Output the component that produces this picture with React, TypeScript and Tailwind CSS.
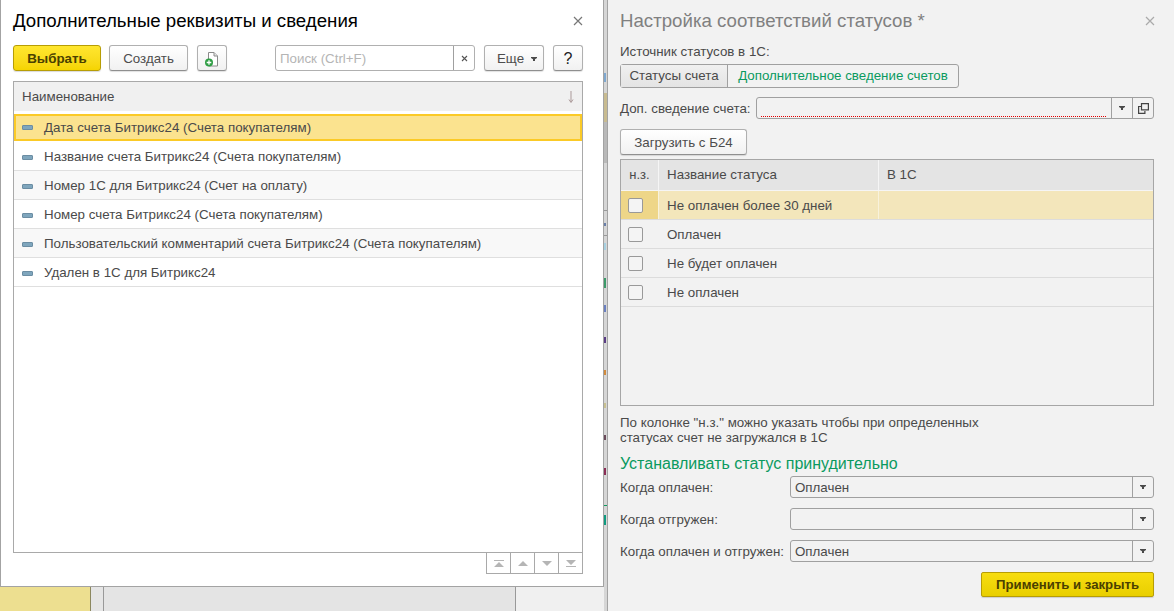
const font = "font-['Liberation_Sans',Arial,sans-serif]"

function Dash() {
  return <span className="block w-[11px] h-[5px] bg-[#7fa6bd] border border-[#6b8da3] rounded-[1px] shrink-0" />
}

function Caret() {
  return (
    <svg width="6" height="4" viewBox="0 0 6 4" className="block">
      <path d="M0 0h6v1L4 2.200V4H2V2.200L0 1z" fill="#4a4a4a" />
    </svg>
  )
}

function DocPlus() {
  return (
    <svg width="14" height="15" viewBox="0 0 14 15">
      <path d="M3.500.5h5.500l3.500 3.500v10h-9z" fill="#fff" stroke="#8a8a8a" />
      <path d="M9 .5v3.500h3.500" fill="#e4e4e4" stroke="#8a8a8a" />
      <circle cx="4" cy="10.500" r="4" fill="#2f9e44" />
      <path d="M4 8.200v4.600M1.700 10.500h4.600" stroke="#fff" strokeWidth="1.300" />
    </svg>
  )
}

function Close({ color }: { color: string }) {
  return (
    <svg width="10" height="10" viewBox="0 0 10 10">
      <path d="M1 1l8 8M9 1l-8 8" stroke={color} strokeWidth="1.200" fill="none" />
    </svg>
  )
}

function GrayButton({ children, className }: { children: React.ReactNode; className: string }) {
  return (
    <div className={`flex items-center justify-center h-[26px] pt-[2px] rounded-[3px] border border-[#b0b0b0] border-b-[#8f8f8f] bg-gradient-to-b from-white to-[#f1f1f1] shadow-[0_1px_1px_rgba(0,0,0,0.12)] text-[#4d4d4d] ${className}`}>
      {children}
    </div>
  )
}

function PagerButton({ d }: { d: string }) {
  return (
    <div className="flex-1 flex items-center justify-center border-l border-[#a9a9a9] first:border-l-0">
      <svg width="10" height="7" viewBox="0 0 10 7">
        <path d={d} fill="#b5b5b5" />
      </svg>
    </div>
  )
}

function LeftDialog() {
  const rows = [
    "Дата счета Битрикс24 (Счета покупателям)",
    "Название счета Битрикс24 (Счета покупателям)",
    "Номер 1С для Битрикс24 (Счет на оплату)",
    "Номер счета Битрикс24 (Счета покупателям)",
    "Пользовательский комментарий счета Битрикс24 (Счета покупателям)",
    "Удален в 1С для Битрикс24",
  ]
  return (
    <div className="h-[587px] w-[604px] shrink-0 bg-white border-l border-b border-r border-[#a3a3a3] flex flex-col pl-[12px] pr-[20px]">
      <div className="h-[45px] flex items-center justify-between pb-[3px]">
        <span className="text-[18.67px] text-black">Дополнительные реквизиты и сведения</span>
        <Close color="#777" />
      </div>
      <div className="h-[26px] flex items-center text-[13.33px]">
        <div className="w-[88px] h-[26px] pt-[2px] flex items-center justify-center rounded-[3px] border border-[#b79d05] bg-gradient-to-b from-[#ffe62e] to-[#f5d400] shadow-[0_1px_1px_rgba(0,0,0,0.15)] font-bold text-[#4a4000]">Выбрать</div>
        <GrayButton className="w-[79px] ml-[8px]">Создать</GrayButton>
        <GrayButton className="w-[30px] ml-[9px]">
          <DocPlus />
        </GrayButton>
        <div className="w-[200px] ml-[48px] h-[26px] flex rounded-[3px] border border-[#b0b0b0] bg-white">
          <span className="flex-1 pl-[4px] leading-[26px] text-[#b5b5b5]">Поиск (Ctrl+F)</span>
          <span className="w-[21px] border-l border-[#a0a0a0] flex items-center justify-center text-[#555]">
            <svg width="7" height="7" viewBox="0 0 7 7"><path d="M1 1l5 5M6 1l-5 5" stroke="#555" strokeWidth="1.100" /></svg>
          </span>
        </div>
        <GrayButton className="w-[60px] ml-[9px] gap-[7px] pl-[6px]">
          <span>Еще</span>
          <Caret />
        </GrayButton>
        <GrayButton className="w-[30px] ml-[9px] text-[16px] text-[#222]">?</GrayButton>
      </div>
      <div className="mt-[10px] h-[472px] border border-[#a9a9a9] flex flex-col text-[13.33px] text-[#4a4a4a]">
        <div className="h-[29px] shrink-0 bg-[#f0f0f0] flex items-center justify-between pl-[8px] pr-[7px]">
          <span>Наименование</span>
          <svg width="8" height="12" viewBox="0 0 8 12"><path d="M4 0v11M2 8.500L4 11.500 6 8.500" stroke="#a99" fill="none" /></svg>
        </div>
        <div className="h-[3px] shrink-0 bg-white" />
        {rows.map((r, i) => (
          <div
            key={r}
            className={
              i === 0
                ? "h-[27px] mb-[1px] shrink-0 flex items-center pl-[6px] gap-[11px] bg-[#fbe38f] border-2 border-[#fbca26]"
                : `h-[29px] shrink-0 pt-[2px] flex items-center pl-[8px] gap-[11px] border-b border-[#dfdfdf] ${i % 2 === 0 ? "bg-[#f8f8f8]" : "bg-white"}`
            }
          >
            <Dash />
            <span>{r}</span>
          </div>
        ))}
      </div>
      <div className="self-end h-[21px] w-[97px] flex border border-t-0 border-[#a9a9a9]">
        <PagerButton d="M0 0h10v1H0zM5 2l5 5H0z" />
        <PagerButton d="M5 1l5 5H0z" />
        <PagerButton d="M0 1h10L5 6z" />
        <PagerButton d="M0 0h10L5 5zM0 6h10v1H0z" />
      </div>
    </div>
  )
}

function BackgroundStrip() {
  return (
    <div className="flex h-[24px] w-[604px]">
      <div className="w-[90px] bg-[#eddf90]" />
      <div className="w-[14px] border-l border-r border-l-[#8c8860] border-r-[#999] bg-[#e5e5e5]" />
      <div className="w-[412px] bg-[#e4e4e4] border-r border-[#999]" />
      <div className="flex-1 bg-[#f0f0f0]" />
    </div>
  )
}

// sliver of the window behind the dialogs
function Sliver() {
  return (
    <div className="w-[3px] h-[611px] shrink-0 bg-[#d6d6d6] flex flex-col">
      <div className="h-[73px] shrink-0" />
      <div className="h-[9px] w-[2px] bg-[#7fa8cf]" />
      <div className="h-[11px] shrink-0" />
      <div className="h-[29px] bg-[#c8bb90]" />
      <div className="h-[41px] bg-[#b9b9b9]" />
      <div className="h-[47px] shrink-0" />
      <div className="h-[1px] bg-[#999]" />
      <div className="h-[12px] shrink-0" />
      <div className="h-[3px] w-[2px] bg-[#6a7fa8]" />
      <div className="h-[9px] shrink-0" />
      <div className="h-[1px] bg-[#999]" />
      <div className="h-[7px] shrink-0" />
      <div className="h-[7px] w-[2px] bg-[#a8d0e0]" />
      <div className="h-[28px] shrink-0" />
      <div className="h-[10px] w-[2px] bg-[#3d9a6a]" />
      <div className="h-[17px] shrink-0" />
      <div className="h-[7px] w-[2px] bg-[#6a7fc0]" />
      <div className="h-[25px] shrink-0" />
      <div className="h-[6px] w-[2px] bg-[#5a3d85]" />
      <div className="h-[27px] shrink-0" />
      <div className="h-[5px] w-[2px] bg-[#d08a3d]" />
      <div className="h-[28px] shrink-0" />
      <div className="h-[5px] w-[2px] bg-[#c8c090]" />
      <div className="h-[27px] shrink-0" />
      <div className="h-[5px] w-[2px] bg-[#6a4a5a]" />
      <div className="h-[28px] shrink-0" />
      <div className="h-[7px] w-[2px] bg-[#8a2d55]" />
      <div className="h-[30px] shrink-0" />
      <div className="h-[1px] bg-[#0f9a60]" />
      <div className="h-[9px] shrink-0" />
      <div className="h-[10px] w-[2px] bg-[#0f9a80]" />
    </div>
  )
}

function SelectField({ value, suffix = false }: { value?: string; suffix?: boolean }) {
  return (
    <div className="flex-1 h-[22px] flex rounded-[3px] border border-[#a0a0a0] bg-[#f2f2f2]">
      <span className="flex-1 pl-[4px] leading-[21px] text-[#4a4a4a]">{value}</span>
      <span className="w-[21px] border-l border-[#a0a0a0] flex items-center justify-center">
        <Caret />
      </span>
      {suffix && (
        <span className="w-[21px] border-l border-[#a0a0a0] flex items-center justify-center">
          <svg width="11" height="11" viewBox="0 0 11 11" fill="none" stroke="#444" strokeWidth="1.200">
            <path d="M3.500.6h6.900v6.300H3.500z" />
            <path d="M3 3.500H.6v6.900h6.300V8" />
          </svg>
        </span>
      )}
    </div>
  )
}

function RightPanel() {
  const statuses = ["Не оплачен более 30 дней", "Оплачен", "Не будет оплачен", "Не оплачен"]
  return (
    <div className="flex-1 h-[611px] bg-[#f2f2f2] border-l border-[#a3a3a3] pl-[12px] pr-[20px] flex flex-col text-[13.33px] text-[#4a4a4a]">
      <div className="h-[44px] flex items-center justify-between pb-[2px]">
        <span className="text-[18.67px] text-[#808080]">Настройка соответствий статусов *</span>
        <span className="-mr-[1px]">
          <Close color="#aaa" />
        </span>
      </div>
      <div className="h-[16px] leading-[16px]">Источник статусов в 1С:</div>
      <div className="mt-[4px] h-[24px] w-[339px] flex rounded-[3px] border border-[#a0a0a0]">
        <span className="w-[107px] flex items-center justify-center border-r border-[#a0a0a0] bg-gradient-to-b from-[#f0f0f0] to-[#e4e4e4]">Статусы счета</span>
        <span className="flex-1 flex items-center justify-center text-[#0a9a5f]">Дополнительное сведение счетов</span>
      </div>
      <div className="mt-[9px] h-[22px] flex items-center">
        <span className="w-[136px] shrink-0 pt-[1px]">Доп. сведение счета:</span>
        <div className="flex-1 relative">
          <SelectField suffix />
          <div className="absolute left-[5px] w-[345px] bottom-[2px] border-b border-dotted border-[#e00000]" />
        </div>
      </div>
      <GrayButton className="mt-[10px] w-[127px] shrink-0">Загрузить с Б24</GrayButton>
      <div className="mt-[4px] h-[247px] shrink-0 border border-[#a6a6a6] flex flex-col">
        <div className="h-[31px] shrink-0 bg-[#e4e4e4] flex items-center border-b border-[#f5f5f5]">
          <span className="w-[38px] h-full flex items-center justify-center text-[13px] border-r border-[#f5f5f5]">н.з.</span>
          <span className="w-[220px] h-full flex items-center pl-[8px] border-r border-[#f5f5f5]">Название статуса</span>
          <span className="flex-1 pl-[8px]">В 1С</span>
        </div>
        {statuses.map((s, i) => (
          <div key={s} className={`h-[29px] shrink-0 flex items-center border-b border-[#dcdcdc] ${i === 0 ? "bg-[#f3e6bb]" : ""}`}>
            <span className={`w-[38px] h-full flex items-center pl-[7px] border-r ${i === 0 ? "bg-[#eed688] border-[#f8f2dc]" : "border-transparent"}`}>
              <span className="block w-[15px] h-[15px] rounded-[2px] border border-[#999] bg-[#f4f4f4]" />
            </span>
            <span className={`w-[220px] h-full flex items-center pl-[8px] pt-[2px] border-r ${i === 0 ? "border-[#f8f2dc]" : "border-transparent"}`}>{s}</span>
          </div>
        ))}
      </div>
      <div className="mt-[9px] leading-[15px] h-[30px] shrink-0">
        По колонке "н.з." можно указать чтобы при определенных
        <br />
        статусах счет не загружался в 1С
      </div>
      <div className="mt-[9px] h-[20px] shrink-0 text-[16px] leading-[20px] text-[#0a9a5f]">Устанавливать статус принудительно</div>
      <div className="mt-[2px] h-[22px] shrink-0 flex items-center">
        <span className="w-[170px] shrink-0 pt-[2px]">Когда оплачен:</span>
        <SelectField value="Оплачен" />
      </div>
      <div className="mt-[10px] h-[22px] shrink-0 flex items-center">
        <span className="w-[170px] shrink-0 pt-[2px]">Когда отгружен:</span>
        <SelectField />
      </div>
      <div className="mt-[10px] h-[22px] shrink-0 flex items-center">
        <span className="w-[170px] shrink-0 pt-[2px]">Когда оплачен и отгружен:</span>
        <SelectField value="Оплачен" />
      </div>
      <div className="mt-[10px] self-end w-[173px] h-[25px] shrink-0 flex items-center justify-center rounded-[2px] border border-[#b79d05] bg-gradient-to-b from-[#f7dd10] to-[#e9cf00] font-bold text-[13.2px] text-[#4a4000] shadow-[0_1px_1px_rgba(0,0,0,0.15)]">Применить и закрыть</div>
    </div>
  )
}

export default function App() {
  return (
    <div className={`flex w-[1174px] h-[611px] overflow-hidden ${font}`}>
      <div className="w-[604px] shrink-0 flex flex-col">
        <LeftDialog />
        <BackgroundStrip />
      </div>
      <Sliver />
      <RightPanel />
    </div>
  )
}
